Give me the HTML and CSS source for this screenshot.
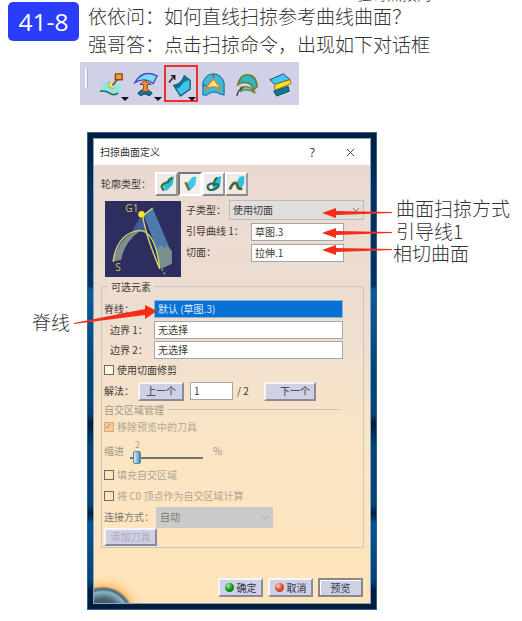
FILE: index.html
```html
<!DOCTYPE html>
<html lang="zh-CN">
<head>
<meta charset="utf-8">
<title>41-8 扫掠曲面</title>
<link rel="stylesheet" href="styles.css">
</head>
<body>
<main class="page">
  <div class="previous">强哥点拨的</div>
  <header class="question">
    <span class="badge">41-8</span>
    <div class="qa"><p>依依问：如何直线扫掠参考曲线曲面？</p><p>强哥答：点击扫掠命令，出现如下对话框</p></div>
  </header>

  <div class="toolbar">
    <i class="grip"></i>
    <span class="tool drop"><svg viewBox="0 0 28 28"><path d="M2 20l4-9 17 3-3 10z" fill="#8be6ea"/><path d="M1 21q6-1 10 2t9 0" fill="none" stroke="#286b45" stroke-width="1.6"/><path d="M12 17l8-9" stroke="#765018" stroke-width="1.8"/><path d="M11 10l-1 7 6 1" fill="#ffe65b" stroke="#d1a62c"/><path d="M17 3h7v6h-7z" fill="#f6a02c" stroke="#944a16" stroke-width="1.5"/></svg></span>
    <span class="tool drop"><svg viewBox="0 0 28 28"><path d="M2 12Q10-2 25 5l-4 8Q12 6 2 12z" fill="#78ddf5" stroke="#454ac1" stroke-width="1.4"/><path d="M5 23q7-8 15 0l-3 3q-5-4-9 0z" fill="#087794" stroke="#153e79"/><path d="M9 21l2-2v-5H7l5-4 7 4h-4v5l2 2z" fill="#ee8f36" stroke="#8b4915"/></svg></span>
    <span class="tool drop selected"><svg viewBox="0 0 28 28"><path d="M7 15q8-1 11-10l6 5v9q-6 4-10 7z" fill="#3fc4ec" stroke="#15546f" stroke-width="1.3"/><path d="M7 15q8-1 11-10l6 4q-7 1-9 6-3 4-6 3z" fill="#087794"/><path d="M2 12l6-7M4 5h4v4" fill="none" stroke="#222" stroke-width="1.6"/></svg></span>
    <span class="tool"><svg viewBox="0 0 28 28"><path d="M3 25V12Q6 3 14 3t11 9v13l-4-1q-7-5-14 1z" fill="#35bde0" stroke="#225a7d"/><path d="M14 3v7M3 15h4" stroke="#225a7d"/><path d="M5 19l9-11 8 11q-8-5-17 0z" fill="#ffe99a" stroke="#d08c2d" stroke-width="1.8"/></svg></span>
    <span class="tool"><svg viewBox="0 0 28 28"><path d="M4 14Q7 3 14 4q9 0 10 12l-4 4q-1-8-8-8-4-1-8 2z" fill="#29b9c6" stroke="#6d8132" stroke-width="1.8"/><path d="M7 17q10-3 15 6-8-6-15-2z" fill="#66cadd" stroke="#6d8132" stroke-width="1.4"/><path d="M3 26q1-7 7-9" fill="none" stroke="#444" stroke-width="1.4"/></svg></span>
    <span class="tool"><svg viewBox="0 0 28 28"><path d="M3 9l14-6 7 6-16 5z" fill="#42c7f2" stroke="#174a67"/><path d="M8 14l16-5 1 4-17 7z" fill="#ffe329" stroke="#8c751a"/><path d="M7 21l15-5 1 5-13 5z" fill="#087b91" stroke="#154452"/></svg></span>
  </div>

  <div class="figure">
    <div class="note-left">脊线</div>
    <section class="dialog">
      <div class="window">
        <div class="titlebar"><span>扫掠曲面定义</span><b>?</b><svg viewBox="0 0 10 10"><path d="M1 1l8 8M9 1l-8 8"/></svg></div>
        <div class="content">
          <div class="profiles">
            <span class="label">轮廓类型：</span>
            <span class="profile"><svg viewBox="0 0 20 20"><path d="M6 12q4-2 6-7l6-4-2 10-7 7z" fill="#24bfdd"/><path d="M16 3q-4 2-5 5-6 1-7 5 1 3 3 4" fill="none" stroke="#39704a" stroke-width="2.8"/></svg></span>
            <span class="profile pressed"><svg viewBox="0 0 20 20"><path d="M7 9l6-7h4l-1 9-7 7z" fill="#3ec9e6"/><path d="M5 8l4 9" stroke="#736f2e" stroke-width="2.8"/></svg></span>
            <span class="profile"><svg viewBox="0 0 20 20"><path d="M8 10l4-7 6-2-1 9-7 7z" fill="#24bfdd"/><path d="M14 3q-3 1-4 6-8 1-7 5 1 4 7 2 6-3 5-5-2-2-6 1" fill="none" stroke="#276d50" stroke-width="2.5"/></svg></span>
            <span class="profile"><svg viewBox="0 0 20 20"><path d="M9 9l4-7 5-1v9l-5 6z" fill="#30bfdd"/><path d="M2 16q4-9 7-7 1 1 2 5 1 2 5 1" fill="none" stroke="#59612b" stroke-width="3"/></svg></span>
          </div>
          <div class="definition">
            <svg class="preview" viewBox="0 0 75 75"><path fill="#2d2d60" d="M0 0h75v75H0z"/><path d="M36 13L26 31l14-1z" fill="#3b5c94"/><path d="M38 14l9-7 18 42v13l-10 3-8-28z" fill="#4d79ab"/><path d="M51 46l5-2 2 3 3-3 5 5v13l-11 5z" fill="#78918f"/><path d="M8 60Q14 33 35 29q-16 11-19 29z" fill="#808e8e"/><path d="M8 60Q12 32 34 29q16 1 20 38M37 13q2 18 17 54M38 14l9-7" fill="none" stroke="#d1d46f" stroke-width="1.4"/><path d="M56 67l4 7" stroke="#d1d46f" stroke-dasharray="2 2"/><circle cx="36" cy="13" r="3.2" fill="#ffe41c"/><text x="20" y="11">G1</text><text x="10" y="69">S</text></svg>
            <div class="params">
              <div class="param"><span>子类型：</span><div class="combo">使用切面<svg viewBox="0 0 8 5"><path d="M1 1l3 3 3-3"/></svg></div></div>
              <div class="param"><span class="wide">引导曲线 1：</span><div class="field">草图.3</div></div>
              <div class="param"><span class="wide">切面：</span><div class="field">拉伸.1</div></div>
            </div>
          </div>
          <div class="options">
            <div class="legend"><span>可选元素</span></div>
            <div class="limits">
              <div class="limit"><span>脊线：</span><div class="field chosen">默认 (草图.3)</div></div>
              <div class="limit inset"><span>边界 1：</span><div class="field">无选择</div></div>
              <div class="limit inset"><span>边界 2：</span><div class="field">无选择</div></div>
            </div>
            <div class="check trim"><i class="box cream"></i>使用切面修剪</div>
            <div class="solution"><span>解法：</span><button class="prev">上一个</button><div class="field count">1</div><span class="total">/ 2</span><button class="next">下一个</button></div>
            <div class="subhead">自交区域管理</div>
            <div class="check remove"><i class="box orange">✓</i>移除预览中的刀具</div>
            <div class="setback"><span>缩进</span><div class="slider"><small>2</small><div class="rail"><i></i></div></div><span>%</span></div>
            <div class="check fill"><i class="box"></i>填充自交区域</div>
            <div class="check vertex"><i class="box"></i>将 C0 顶点作为自交区域计算</div>
            <div class="connection"><span>连接方式：</span><div class="combo gray">自动<svg viewBox="0 0 8 5"><path d="M1 1l3 3 3-3"/></svg></div></div>
            <button class="add">添加刀具</button>
          </div>
          <div class="actions">
            <button><i class="dot green"></i>确定</button><button><i class="dot red"></i>取消</button><button class="default">预览</button>
          </div>
        </div>
      </div>
    </section>
    <div class="notes-right"><p>曲面扫掠方式</p><p>引导线1</p><p>相切曲面</p></div>
    <svg class="arrows" viewBox="0 0 522 489"><path d="M322 81l14-5v3l56 1v1l-56 2v3zM322 101l14-5v3l56 1v1l-56 2v3zM322 118l14-5v3l56 1v1l-56 2v3zM157 179l-12-6v4L74 191v1l71-9v4z"/></svg>
  </div>
</main>
</body>
</html>
```
FILE: styles.css
```css
* { box-sizing: border-box; }
body { margin: 0; background: #fff; overflow: hidden; }
p { margin: 0; }
button { display: flex; align-items: center; justify-content: center; padding: 0; font: inherit; color: #34343e; background: #d0d0e4; border: 2px solid; border-color: #f5f4fa #8a8a9c #8a8a9c #f5f4fa; white-space: nowrap; }
.page { position: relative; width: 522px; height: 621px; overflow: hidden; font-family: "Liberation Sans", "Noto Sans CJK SC", sans-serif; color: #333; }
.previous { position: absolute; left: 357px; top: -15px; height: 17px; font: 300 15px/17px "Noto Sans CJK SC", sans-serif; }
.question { display: flex; height: 62px; padding: 2px 0 0 8px; }
.badge { width: 71px; height: 39px; border-radius: 5px; background: #2a3dfc; color: #fff; font: 500 24.5px/40px "Open Sans", "Noto Sans", sans-serif; text-align: center; }
.qa { margin: 0 0 0 9px; font: 300 19px/28px "Noto Sans CJK SC", sans-serif; white-space: nowrap; }
.toolbar { display: flex; align-items: center; width: 219px; height: 43px; margin-left: 80px; background: #d0d0e6; }
.grip { width: 3px; height: 20px; margin: -12px 9px 0 5px; background: #f2f2f8; border-right: 1px solid #b4b4c8; }
.tool { position: relative; width: 34px; height: 37px; padding: 6px 4px 0 2px; }
.tool svg { display: block; width: 27px; height: 27px; }
.drop::after { content: ""; position: absolute; right: 2px; bottom: 1px; border: 4px solid transparent; border-top-color: #111; border-bottom: 0; }
.selected { border: 2px solid #ef3028; padding: 4px 1px 0; }
.selected::after { right: 0; bottom: -1px; }
.figure { position: relative; display: flex; height: 489px; margin-top: 27px; }
.note-left { width: 87px; padding: 176px 0 0 32px; font: 300 19px/28px "Noto Sans CJK SC", sans-serif; }
.dialog { flex: none; width: 290px; height: 478px; padding: 6px; background: linear-gradient(#001c3e 0, #05305e 12%, #063360 32%, #0b5b9b 33%, #064477 50%, #064477 59%, #001a38 61%, #064477 66%, #064477 78%, #001a38 80%, #075394 82%, #064477 94%, #001d3d 96%); border: 1px solid #35618a; }
.window { height: 464px; outline: 1px solid #7da8c6; background: #fff; }
.titlebar { display: flex; align-items: center; height: 26px; padding-left: 6px; font: 10px/16px "Noto Sans CJK SC", sans-serif; }
.titlebar b { margin-left: auto; font: 12px "Open Sans", sans-serif; }
.titlebar svg { width: 9px; height: 9px; margin: 0 15px 0 31px; stroke: #333; stroke-width: 1; fill: none; }
.content { height: 438px; padding: 7px 7px 0 7px; background: radial-gradient(circle at 9px 452px, #3f464c 0, #4d5f6b 18px, #86b4ca 25px, #4a6474 28px, #ffb04899 31px, #ffcf8666 36px, transparent 43px), linear-gradient(#e9d9d1, #efdfd0 38%, #fae5c4 64%, #ffe4ba); font: 10px/16px "Noto Sans CJK SC", sans-serif; color: #3e3936; }
.profiles { display: flex; align-items: center; height: 24px; }
.label { width: 54px; }
.profile { width: 23.3px; height: 24px; padding: 1px; background: #eeeae7; border: 2px solid; border-color: #fff #999 #888 #fff; }
.profile svg { display: block; width: 18px; height: 18px; }
.pressed { background: #f5eeeb; border-color: #777 #fff #fff #777; }
.definition { display: flex; height: 91px; padding: 5px 0 0 4px; }
.preview { width: 76px; height: 76px; flex: none; }
.preview text { fill: #c9cc55; font: 10px "Open Sans", sans-serif; }
.params { width: 178px; margin: -2px 0 0 5px; }
.param { display: flex; align-items: center; height: 21px; white-space: nowrap; }
.param > span { width: 43px; flex: none; }
.param > .wide { width: 65px; }
.field { flex: none; width: 93px; height: 18px; padding-left: 3px; background: #fff; border: 1px solid #a4a5aa; line-height: 16px; }
.params .field { margin-top: 2px; }
.combo { display: flex; align-items: center; justify-content: space-between; width: 135px; height: 20px; padding: 0 3px; border: 1px solid #bbb; background: #dfdedd; }
.combo svg { width: 8px; height: 5px; fill: none; stroke: #777; }
.options { width: 263px; height: 262px; margin-top: -1px; padding: 0 2px; border: 1px solid #c9c5c1; }
.legend { height: 13px; margin-top: -8px; padding-left: 4px; line-height: 16px; }
.legend span { padding: 0 3px; background: #efdfd0; }
.limits { padding-top: 8px; }
.limit { display: flex; height: 20.7px; line-height: 17px; }
.limit > span { width: 50px; }
.limit.inset > span { padding-left: 6px; }
.limit .field { width: 189px; }
.field.chosen { background: #0871d5; color: #dcecff; border-color: #8eb3d4; }
.check { display: flex; align-items: center; height: 20px; white-space: nowrap; }
.box { width: 10px; height: 10px; margin-right: 3px; border: 1px solid #6f675e; font: 8px/8px "DejaVu Sans", sans-serif; }
.cream { background: #fffbe2; }
.orange { border-color: #dfa777; background: #f9c99d; color: #af6f42; }
.trim { margin-top: -2px; }
.solution { display: flex; align-items: center; height: 20px; margin-top: 1px; }
.solution > span:first-child { width: 34px; }
.solution button { height: 19px; font-size: 10px; }
.prev { width: 46px; }
.next { width: 52px; padding-left: 10px; }
.count { width: 43px; margin-left: 6px; }
.total { width: 31px; padding-left: 4px; }
.subhead { display: flex; align-items: center; gap: 3px; width: 236px; height: 17px; color: #a39788; white-space: nowrap; }
.subhead::after { content: ""; flex: 1; height: 1px; background: #c9c1b2; }
.remove, .fill, .vertex { color: #b1a694; }
.remove { height: 18px; }
.setback { display: flex; align-items: center; height: 29px; color: #9e9485; }
.slider { width: 73px; height: 28px; margin: 0 10px 0 6px; }
.slider small { display: block; height: 14px; padding: 2px 0 0 5px; font-size: 9px; line-height: 12px; color: #b1a694; }
.rail { height: 13px; background: linear-gradient(#77746f, #77746f) 0 6px / 100% 2px no-repeat; }
.rail i { display: block; width: 8px; height: 13px; margin-left: 3px; border: 1px solid #5d8195; border-radius: 2px; background: linear-gradient(90deg, #d9f0fa, #488eb2); }
.vertex { height: 21px; }
.connection { display: flex; align-items: center; height: 22px; color: #81796e; white-space: nowrap; }
.connection > span { width: 52px; }
.combo.gray { width: 117px; height: 21px; background: #cacaca; border-color: #cacaca; }
.gray svg { stroke: #aaa; }
.add { width: 53px; height: 18px; color: #aaa9b9; font-size: 10px; }
.actions { display: flex; justify-content: flex-end; gap: 5px; margin-top: 30px; }
.actions button { width: 45px; height: 19px; gap: 3px; font-size: 10px; }
.actions .default { border-color: #888; box-shadow: inset 1px 1px #fff; }
.dot { width: 9px; height: 9px; border-radius: 50%; }
.green { background: radial-gradient(circle at 35% 30%, #a3f39b, #159c1b 45%, #075c0b); }
.red { background: radial-gradient(circle at 35% 30%, #ffd2ba, #e55138 45%, #a02a17); }
.notes-right { padding: 65px 0 0 19px; font: 300 19px/22.7px "Noto Sans CJK SC", sans-serif; white-space: nowrap; }
.notes-right p:last-child { margin-left: -3px; }
.arrows { position: absolute; left: 0; top: 0; width: 522px; height: 489px; fill: #f52c18; }
```
